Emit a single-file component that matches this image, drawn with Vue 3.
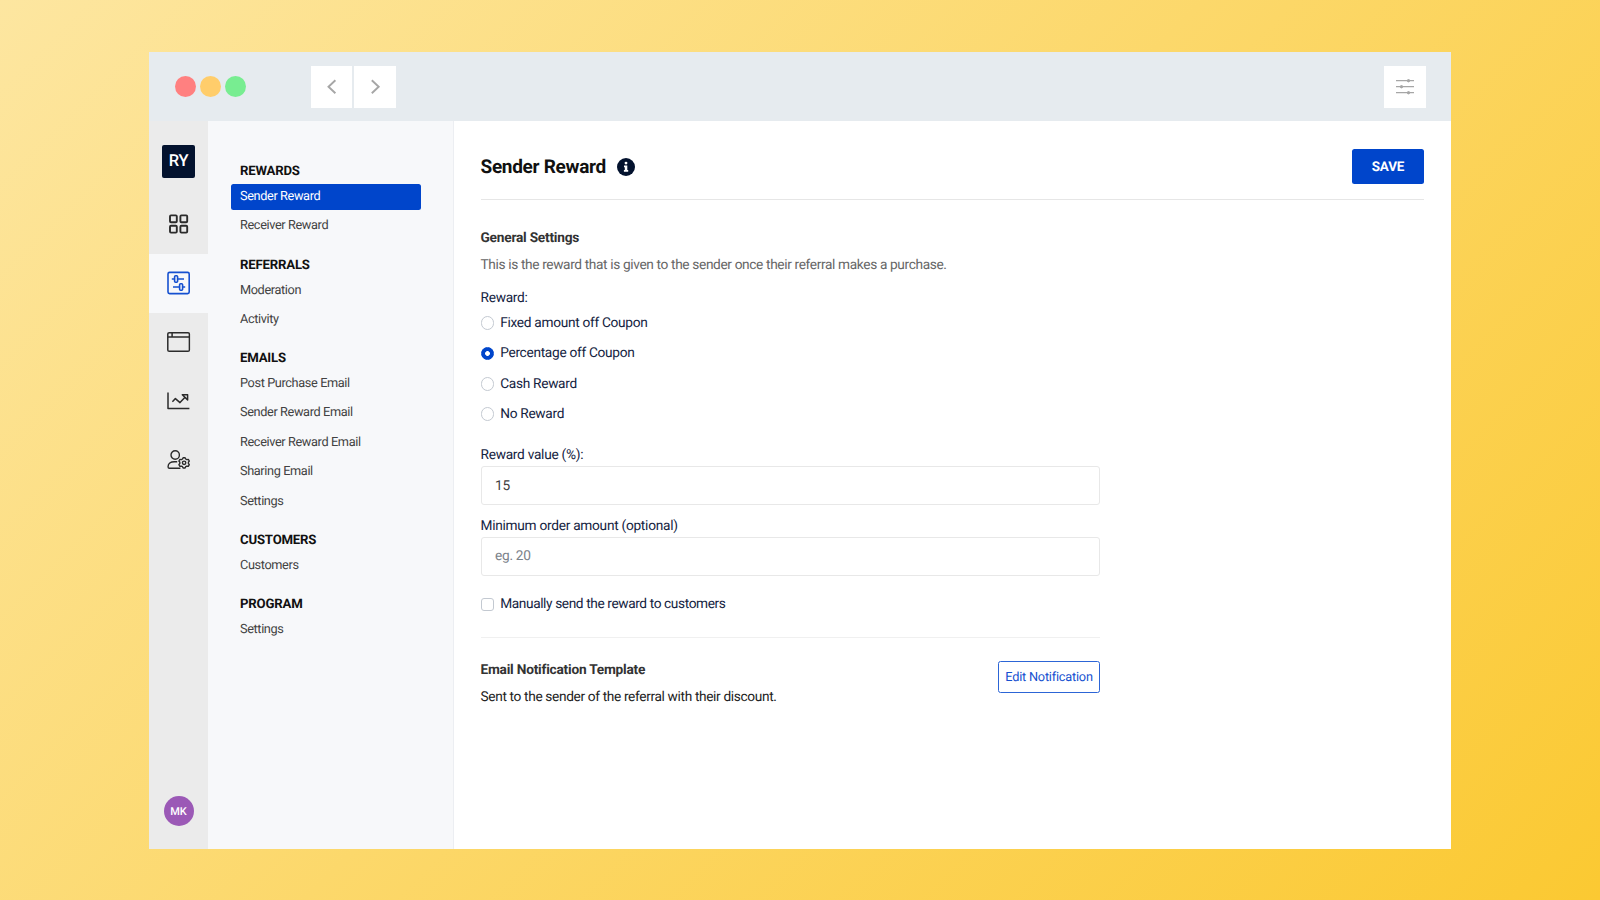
<script setup>
import { ref } from 'vue'

const groups = [
  { title: 'Rewards', items: ['Sender Reward', 'Receiver Reward'] },
  { title: 'Referrals', items: ['Moderation', 'Activity'] },
  { title: 'Emails', items: ['Post Purchase Email', 'Sender Reward Email', 'Receiver Reward Email', 'Sharing Email', 'Settings'] },
  { title: 'Customers', items: ['Customers'] },
  { title: 'Program', items: ['Settings'] },
]
const options = ['Fixed amount off Coupon', 'Percentage off Coupon', 'Cash Reward', 'No Reward']
const active = ref('Sender Reward')
const reward = ref('Percentage off Coupon')
const value = ref('15')
const minimum = ref('')
const manual = ref(false)
</script>

<template>
  <div class="backdrop">
    <div class="window">
      <header class="topbar">
        <div class="dots"><i class="dot red"></i><i class="dot amber"></i><i class="dot green"></i></div>
        <div class="nav">
          <button class="square"><svg width="42" height="42" viewBox="0 0 42 42"><path d="M24.4 14.2 17.5 20.700l6.900 6.500" /></svg></button>
          <button class="square"><svg width="42" height="42" viewBox="0 0 42 42"><path d="M17.8 14.200 24.700 20.700l-6.900 6.500" /></svg></button>
        </div>
        <button class="square tune">
          <svg width="42" height="42" viewBox="0 0 42 42">
            <path d="M12 14.700h18M12 20.700h18M12 26.700h18" />
            <circle cx="24.5" cy="14.700" r="1.2" /><circle cx="17.500" cy="20.700" r="1.200" /><circle cx="24.500" cy="26.700" r="1.200" />
          </svg>
        </button>
      </header>

      <div class="body">
        <aside class="rail">
          <div class="logo">RY</div>
          <a class="cell">
            <svg width="24" height="24" viewBox="0 0 24 24" stroke-width="1.9">
              <rect x="3.4" y="3.4" width="6.8" height="6.8" rx="1" /><rect x="13.8" y="3.4" width="6.8" height="6.8" rx="1" />
              <rect x="3.4" y="13.8" width="6.8" height="6.8" rx="1" /><rect x="13.8" y="13.8" width="6.8" height="6.8" rx="1" />
            </svg>
          </a>
          <a class="cell current">
            <svg width="24" height="24" viewBox="0 0 24 24" stroke-width="1.6">
              <rect x="1.4" y="1.4" width="21.2" height="21.2" rx="1.6" />
              <rect x="8" y="4.8" width="3" height="6.4" rx="1" /><path d="M5.2 8H8M11 8h6.4" />
              <rect x="13" y="12.8" width="3" height="6.4" rx="1" /><path d="M6.4 16H13M16 16h2.6" />
            </svg>
          </a>
          <a class="cell">
            <svg width="24" height="24" viewBox="0 0 24 24" stroke-width="1.5">
              <rect x="1.2" y="2.7" width="21.6" height="18.6" rx="1.4" /><path d="M1.2 7h21.6M5.5 2.7V7" />
            </svg>
          </a>
          <a class="cell">
            <svg width="24" height="24" viewBox="0 0 24 24" stroke-width="1.5">
              <path d="M1.4 3.4v16.2h21.4M5.8 12.8l3-3.2 4.6 4 5.3-5.6" />
              <path d="M15.7 5.7h5.3v5.2z" />
            </svg>
          </a>
          <a class="cell">
            <svg width="24" height="24" viewBox="0 0 24 24" stroke-width="1.4">
              <circle cx="8.6" cy="7" r="4.2" />
              <path d="M10.6 13.7H7.8c-4 0-6.3 1.9-6.3 4.7V19c0 .8.5 1.2 1.3 1.2h11" />
              <path d="m16.5 9.7h2l.6 1.3 1.1.6 1.5-.2 1 1.6-.9 1.2v1.3l.9 1.2-1 1.6-1.5-.2-1.1.6-.6 1.3h-2l-.6-1.3-1.1-.6-1.5.2-1-1.6.9-1.2v-1.3l-.9-1.2 1-1.6 1.5.2 1.1-.6z" />
              <circle cx="17.5" cy="14.85" r="1.7" />
            </svg>
          </a>
          <div class="avatar">MK</div>
        </aside>

        <nav class="menu">
          <section v-for="g in groups" :key="g.title" class="group">
            <h4>{{ g.title }}</h4>
            <a v-for="item in g.items" :key="item" class="item" :class="{ selected: item === active }">{{ item }}</a>
          </section>
        </nav>

        <main class="content">
          <div class="head">
            <h1>Sender Reward</h1>
            <svg class="info" width="18" height="18" viewBox="0 0 18 18">
              <circle cx="9" cy="9" r="9" />
              <circle cx="9" cy="5.1" r="1.45" fill="#fff" />
              <path d="M7 7.6h3.3v4.3h.9v1.8H6.900v-1.800h.9V9.300H7z" fill="#fff" />
            </svg>
            <button class="save">SAVE</button>
          </div>
          <div class="form">
            <h3>General Settings</h3>
            <p class="hint">This is the reward that is given to the sender once their referral makes a purchase.</p>
            <div class="label first">Reward:</div>
            <label v-for="o in options" :key="o" class="choice">
              <input v-model="reward" type="radio" name="reward" :value="o" /><span>{{ o }}</span>
            </label>
            <div class="label value">Reward value (%):</div>
            <input v-model="value" class="field" type="text" />
            <div class="label min">Minimum order amount (optional)</div>
            <input v-model="minimum" class="field" type="text" placeholder="eg. 20" />
            <label class="choice manual"><input v-model="manual" type="checkbox" /><span>Manually send the reward to customers</span></label>
            <div class="template">
              <div>
                <h3>Email Notification Template</h3>
                <p class="sent">Sent to the sender of the referral with their discount.</p>
              </div>
              <button class="edit">Edit Notification</button>
            </div>
          </div>
        </main>
      </div>
    </div>
  </div>
</template>

<style>
body { margin: 0; overflow: hidden; }
</style>

<style scoped>
.backdrop, .backdrop * { box-sizing: border-box; }
.backdrop {
  width: 1600px; height: 900px; padding: 52px 149px 51px;
  background: linear-gradient(135deg, #fde6a0, #fbc932);
  font-family: Roboto, "Liberation Sans", sans-serif;
  text-rendering: geometricPrecision;
}
h1, h3, h4, p { margin: 0; }
button { padding: 0; border: 0; font-family: inherit; text-rendering: inherit; }
input { text-rendering: inherit; }
.window { width: 1302px; height: 797px; background: #fff; display: flex; flex-direction: column; }
.topbar { height: 69.3px; flex: none; background: #e6ebef; display: flex; align-items: center; padding: .4px 25.5px 0 25.7px; }
.dots { display: flex; gap: 4px; }
.dot { width: 21px; height: 21px; border-radius: 50%; }
.red { background: #ff8080; }
.amber { background: #ffcd6b; }
.green { background: #78ed91; }
.nav { display: flex; gap: 2.1px; margin-left: 65px; }
.square { width: 41.5px; height: 42px; background: #fff; display: flex; }
.square svg { display: block; flex: none; fill: none; stroke: #a6a6a6; stroke-width: 1.9; }
.tune { width: 42px; margin-left: auto; }
.tune svg { stroke-width: 1.3; }
.tune circle { fill: #a6a6a6; stroke-width: 1; }

.body { flex: 1; display: flex; min-height: 0; }
.rail { width: 59px; flex: none; background: #ebebeb; display: flex; flex-direction: column; align-items: center; }
.logo {
  width: 33px; height: 33px; margin: 23.3px 0 17.2px; border-radius: 2px; background: #03122e; color: #fff;
  font-size: 16.5px; font-weight: 500; letter-spacing: -.2px; display: flex; align-items: center; justify-content: center;
}
.cell { width: 59px; height: 59px; display: flex; align-items: center; justify-content: center; color: #2b2b2b; }
.cell svg { fill: none; stroke: currentColor; stroke-linejoin: round; transform: translate(-.4px, 0); }
.current { background: #f7f8fa; color: #1550d0; }
.avatar {
  width: 30px; height: 30px; margin: auto 0 23px; border-radius: 50%; background: #9b59b6; color: #fff;
  font-size: 11px; font-weight: 500; display: flex; align-items: center; justify-content: center;
}

.menu { width: 246px; flex: none; background: #f7f8fa; border-right: 1.5px solid #eceef2; padding: 38.6px 32px 0 23px; }
.group { padding-bottom: 11.1px; }
.group h4 { height: 23.7px; line-height: 23.7px; padding-left: 9px; font-size: 13.2px; font-weight: 700; color: #111; text-transform: uppercase; letter-spacing: -.2px; }
.item { display: block; height: 26.1px; line-height: 26.1px; margin-bottom: 3.3px; padding-left: 9px; border-radius: 2.5px; font-size: 12.74px; letter-spacing: -.38px; color: #424242; }
.selected { margin-bottom: 3.7px; background: #0045cb; color: #fff; width: 189.5px; }

.content { flex: 1; padding: 0 27.3px 0 26.5px; }
.head { height: 78.8px; border-bottom: 1px solid #e6e6e6; display: flex; align-items: center; padding-bottom: 12px; padding-top: 25.4px; }
.head h1 { font-size: 19px; font-weight: 700; letter-spacing: -.3px; color: #111; line-height: 24px; }
.info { margin-left: 11px; fill: #03122e; }
.save { margin-left: auto; width: 71.5px; height: 35px; border-radius: 2.5px; background: #0045cb; color: #fff; font-size: 13.5px; letter-spacing: -.2px; font-weight: 700; }
.form { width: 619.5px; padding-top: 28px; }
h3 { font-size: 13.7px; font-weight: 700; line-height: 20px; color: #333; letter-spacing: -.22px; }
.hint { margin-top: 7px; font-size: 13.7px; line-height: 20px; color: #666; letter-spacing: -.36px; }
.label { font-size: 13.7px; line-height: 20px; color: #14233f; letter-spacing: -.27px; }
.first { margin: 12.9px 0 0; }
.choice { display: flex; align-items: center; height: 30.3px; gap: 6px; font-size: 13.7px; letter-spacing: -.3px; color: #14233f; }
.choice input { appearance: none; margin: 0; width: 13.7px; height: 13.7px; border: 1px solid #c3c9d1; border-radius: 50%; background: #fff; }
.choice input:checked { border-color: #0045cb; background: radial-gradient(circle, #fff 2px, #0045cb 2.8px); }
.value { margin-top: 16px; }
.field {
  display: block; width: 100%; height: 39px; margin-top: 1px; padding: 0 13.6px; border: 1px solid #e8e8e8; border-radius: 3px;
  background: #fff; color: #3f3f3f; font-family: inherit; font-size: 13.7px; letter-spacing: -.3px; outline: none;
}
.field::placeholder { color: #7b828a; opacity: 1; }
.min { margin-top: 10.6px; }
.manual { margin-top: 13.5px; letter-spacing: -.39px; }
.manual input { border-radius: 3px; }
.template { margin-top: 17.5px; border-top: 1px solid #f0f0f0; padding-top: 22px; display: flex; justify-content: space-between; }
.sent { margin-top: 7.3px; font-size: 13.7px; line-height: 20px; color: #222; letter-spacing: -.35px; }
.edit { width: 102px; height: 32px; margin-top: 1px; border: 1px solid #2c65d6; border-radius: 2.5px; background: #fff; color: #1550d0; font-size: 12.74px; letter-spacing: -.21px; }
</style>
